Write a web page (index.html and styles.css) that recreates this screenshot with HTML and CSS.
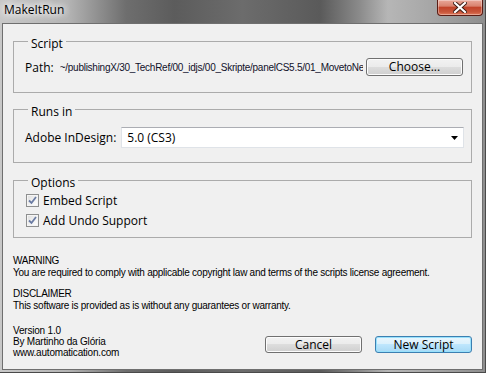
FILE: index.html
```html
<!DOCTYPE html>
<html>
<head>
<meta charset="utf-8">
<link rel="stylesheet" href="styles.css">
</head>
<body>
<div class="window">
  <div class="titlebar">
    <span class="title">MakeItRun</span>
    <button class="close" aria-label="Close">
      <svg width="14" height="11" viewBox="0 0 14 11">
        <path d="M2 1 L12 10 M12 1 L2 10" stroke="#3b1a12" stroke-width="4" stroke-linecap="square"/>
        <path d="M2 1 L12 10 M12 1 L2 10" stroke="#ffffff" stroke-width="2.2" stroke-linecap="square"/>
      </svg>
    </button>
  </div>
  <div class="client">
    <fieldset class="panel panel-script">
      <legend>Script</legend>
      <div class="row">
        <span class="label">Path:</span>
        <span class="path">~/publishingX/30_TechRef/00_idjs/00_Skripte/panelCS5.5/01_MovetoNextPage</span>
        <button class="btn btn-choose">Choose...</button>
      </div>
    </fieldset>
    <fieldset class="panel panel-runs">
      <legend>Runs in</legend>
      <div class="row">
        <span class="label">Adobe InDesign:</span>
        <div class="select">
          <span class="select-value">5.0 (CS3)</span>
          <svg class="select-arrow" width="7" height="4" viewBox="0 0 7 4"><path d="M0 0 H7 L3.5 4 Z" fill="#000"/></svg>
        </div>
      </div>
    </fieldset>
    <fieldset class="panel panel-options">
      <legend>Options</legend>
      <label class="check">
        <span class="box"><svg width="9" height="9" viewBox="0 0 9 9"><path d="M1 4.5 L3.5 7 L8 1" fill="none" stroke="#6a7ba3" stroke-width="1.8"/></svg></span>
        Embed Script
      </label>
      <label class="check">
        <span class="box"><svg width="9" height="9" viewBox="0 0 9 9"><path d="M1 4.5 L3.5 7 L8 1" fill="none" stroke="#6a7ba3" stroke-width="1.8"/></svg></span>
        Add Undo Support
      </label>
    </fieldset>
    <div class="notes">
      <p>WARNING<br>You are required to comply with applicable copyright law and terms of the scripts license agreement.</p>
      <p>DISCLAIMER<br>This software is provided as is without any guarantees or warranty.</p>
    </div>
    <div class="footer">
      <div class="credits">Version 1.0<br>By Martinho da Glória<br>www.automatication.com</div>
      <div class="buttons">
        <button class="btn">Cancel</button>
        <button class="btn btn-default">New Script</button>
      </div>
    </div>
  </div>
</div>
</body>
</html>
```

FILE: styles.css
```css
* { box-sizing: border-box; }
html, body { margin: 0; padding: 0; }
body {
  width: 486px;
  height: 373px;
  overflow: hidden;
  background: #ffffff;
}
.window {
  width: 486px;
  height: 373px;
  display: flex;
  flex-direction: column;
  padding: 0 2px 2px 2px;
  border-right: 1px solid #4a4a4a;
  border-bottom: 1px solid #4a4a4a;
  background: linear-gradient(to right, #c8c8c8 0%, #b4b4b4 14%, #6e6e6e 26%, #5c5c5c 36%, #6c6c6c 50%, #5a5a5a 66%, #8a8a8a 74%, #b6b6b6 80%, #a8a8a8 88%, #8e8e8e 100%);
}
.titlebar {
  height: 23px;
  display: flex;
  align-items: flex-start;
  flex: none;
}
.title {
  font-family: "Open Sans", sans-serif;
  font-size: 12px;
  color: #000;
  padding: 2px 0 0 2px;
  line-height: 16px;
  text-shadow: 0 0 6px #fff, 0 0 8px #fff, 0 0 10px #eee;
}
.close {
  margin-left: auto;
  margin-right: 0;
  width: 46px;
  height: 16px;
  padding: 0;
  border: 1px solid #5a1c14;
  border-top: none;
  border-radius: 0 0 4px 4px;
  background: linear-gradient(to bottom, #e9a899 0%, #d9836f 40%, #c2442a 50%, #c8563b 80%, #e07a5c 100%);
  box-shadow: inset 0 0 0 1px rgba(255,255,255,0.35);
  display: flex;
  align-items: center;
  justify-content: center;
}
.client {
  flex: 1;
  background: #f0f0f0;
  border: 1px solid #6f6f6f;
  padding: 8px 10px 11px 10px;
  display: flex;
  flex-direction: column;
  font-family: "Open Sans", sans-serif;
  font-size: 12px;
  color: #000;
}
.panel {
  margin: 0;
  border: 1px solid #ababab;
  padding: 0 7px 0 11px;
  min-width: 0;
}
.panel legend {
  padding: 4px 3px 0 3px;
  margin-left: 3px;
  line-height: 15px;
}
.panel-script { padding-top: 7px; padding-bottom: 16px; }
.panel-runs { margin-top: 7px; padding-top: 8px; padding-bottom: 14px; }
.panel-options { margin-top: 8px; padding-top: 0; padding-bottom: 7px; }
.row {
  display: flex;
  align-items: center;
}
.label { flex: none; }
.path {
  margin-left: 6px;
  font-family: "Liberation Sans", sans-serif;
  font-size: 10px;
  letter-spacing: -0.26px;
  white-space: nowrap;
  overflow: hidden;
  flex: 1;
  min-width: 0;
  color: #10102a;
}
.btn {
  font-family: "Open Sans", sans-serif;
  font-size: 12px;
  color: #000;
  width: 97px;
  height: 18px;
  padding: 0;
  line-height: 14px;
  border: 1px solid #707070;
  border-radius: 3px;
  background: linear-gradient(to bottom, #f2f2f2 0%, #ebebeb 50%, #dddddd 50%, #cfcfcf 100%);
  box-shadow: inset 0 0 0 1px #fcfcfc;
  flex: none;
}
.btn-choose { margin-left: 3px; margin-right: 1px; }
.select {
  margin-left: 5px;
  flex: 1;
  height: 21px;
  background: #fff;
  border: 1px solid #dfe3e8;
  border-top-color: #abadb3;
  display: flex;
  align-items: center;
  padding: 0 5px 0 5px;
}
.select-value { flex: 1; }
.select-arrow { flex: none; }
.check {
  display: flex;
  align-items: center;
  height: 20px;
  gap: 4px;
  padding-left: 1px;
}
.box {
  width: 13px;
  height: 13px;
  border: 1px solid #8e8f8f;
  background: linear-gradient(135deg, #dcdcdc 0%, #f4f4f4 60%, #ffffff 100%);
  box-shadow: inset 0 0 0 1px #f4f4f4;
  display: flex;
  align-items: center;
  justify-content: center;
}
.notes {
  margin-top: 17px;
  font-family: "Liberation Sans", sans-serif;
  font-size: 10px;
  letter-spacing: -0.26px;
  line-height: 11.5px;
}
.notes p { margin: 0 0 10px 0; }
.footer {
  margin-top: auto;
  display: flex;
  align-items: flex-end;
}
.credits {
  font-family: "Liberation Sans", sans-serif;
  font-size: 10px;
  letter-spacing: -0.2px;
  line-height: 11px;
}
.buttons {
  margin-left: auto;
  display: flex;
  gap: 13px;
  margin-bottom: 5px;
}
.buttons .btn { height: 17px; }
.btn-default {
  border-color: #3c7fb1;
  background: linear-gradient(to bottom, #eaf6fd 0%, #d9f0fc 50%, #bee6fd 50%, #a7d9f5 100%);
  box-shadow: inset 0 0 0 1px #98e1fc;
}
```
